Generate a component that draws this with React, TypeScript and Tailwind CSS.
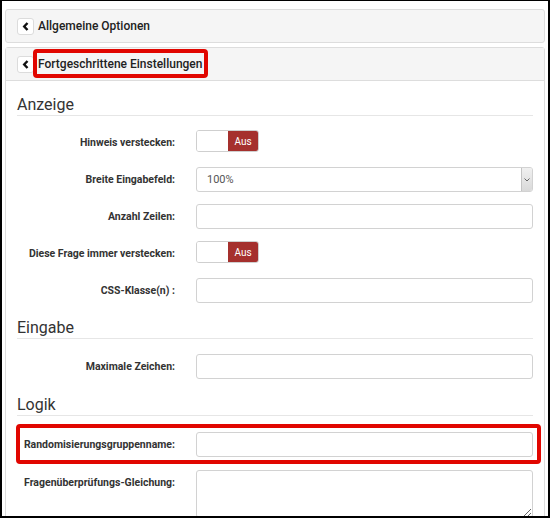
import React from "react";

function BackButton() {
  return (
    <span className="flex h-[17px] w-[17px] shrink-0 items-center justify-center rounded-[3px] border border-[#dcdcdc] bg-white">
      <svg width="8" height="9" viewBox="0 0 8 9">
        <path d="M5.5 1 L2.2 4.5 L5.5 8" fill="none" stroke="#111" strokeWidth="2.4" />
      </svg>
    </span>
  );
}

function Heading({ children, className }: { children: React.ReactNode; className: string }) {
  return (
    <h3 className={`border-b border-[#e6e6e6] text-[16px] leading-[20px] text-[#333] ${className}`}>
      {children}
    </h3>
  );
}

function Row({
  label,
  children,
  highlight,
}: {
  label: string;
  children: React.ReactNode;
  highlight?: boolean;
}) {
  return (
    <div className="relative flex items-start gap-[21px]">
      <label className="w-[158px] shrink-0 text-right text-[10.5px] font-bold leading-[25px] text-[#333] whitespace-nowrap">
        {label}
      </label>
      <div className="min-h-[25px] flex-1">{children}</div>
      {highlight && (
        <div className="pointer-events-none absolute -left-[1px] -right-[8px] -top-[8px] -bottom-[7px] rounded-[4px] border-4 border-[#e10600]" />
      )}
    </div>
  );
}

function Toggle() {
  return (
    <div className="flex h-[22px] w-[63px] overflow-hidden rounded-[3px] border border-[#cfcfcf]">
      <div className="w-[31px] bg-white" />
      <div className="flex flex-1 items-center justify-center bg-[#a5302d] text-[10px] text-white">
        Aus
      </div>
    </div>
  );
}

function TextInput() {
  return <div className="h-[25px] rounded-[3px] border border-[#d2d2d2] bg-white" />;
}

function Select() {
  return (
    <div className="flex h-[25px] items-stretch overflow-hidden rounded-[3px] border border-[#d2d2d2] bg-white">
      <span className="flex-1 pl-[10px] text-[11px] leading-[23px] text-[#555]">100%</span>
      <span className="flex w-[11px] items-center justify-center border-l border-[#c4c4c4] bg-gradient-to-b from-[#f0f0f0] to-[#d9d9d9]">
        <svg width="6" height="4" viewBox="0 0 6 4">
          <path d="M0.5 0.5 L3 3 L5.5 0.5" fill="none" stroke="#666" strokeWidth="1" />
        </svg>
      </span>
    </div>
  );
}

export default function App() {
  return (
    <div className="h-[518px] w-[550px] overflow-hidden border-t border-l-2 border-r-2 border-b-2 border-black bg-white px-[3px] pt-[8px] font-['Roboto',sans-serif]">
      <div className="flex h-[34px] items-center gap-[4px] rounded-[3px] border border-[#dddddd] bg-[#f5f5f5] px-[11px]">
        <BackButton />
        <span className="text-[12px] font-medium text-[#222]">Allgemeine Optionen</span>
      </div>

      <div className="mt-[4px] rounded-t-[3px] border border-[#dddddd]">
        <div className="flex h-[33px] items-center gap-[4px] border-b border-[#dddddd] bg-[#f5f5f5] px-[11px]">
          <BackButton />
          <span className="relative text-[12px] font-medium leading-[14px] text-[#222]">
            Fortgeschrittene Einstellungen
            <span className="pointer-events-none absolute -left-[5px] -right-[6px] -top-[8px] -bottom-[7px] rounded-[4px] border-4 border-[#e10600]" />
          </span>
        </div>

        <div className="px-[11px] pb-[20px]">
          <Heading className="mt-[14px] mb-[14px]">Anzeige</Heading>
          <div className="flex flex-col gap-[12px]">
            <Row label="Hinweis verstecken:">
              <Toggle />
            </Row>
            <Row label="Breite Eingabefeld:">
              <Select />
            </Row>
            <Row label="Anzahl Zeilen:">
              <TextInput />
            </Row>
            <Row label="Diese Frage immer verstecken:">
              <Toggle />
            </Row>
            <Row label="CSS-Klasse(n) :">
              <TextInput />
            </Row>
          </div>

          <Heading className="mt-[15px] mb-[15px]">Eingabe</Heading>
          <div className="flex flex-col gap-[12px]">
            <Row label="Maximale Zeichen:">
              <TextInput />
            </Row>
          </div>

          <Heading className="mt-[16px] mb-[16px]">Logik</Heading>
          <div className="flex flex-col gap-[13px]">
            <Row label="Randomisierungsgruppenname:" highlight>
              <TextInput />
            </Row>
            <Row label="Fragenüberprüfungs-Gleichung:">
              <textarea className="block h-[48px] w-full resize-y rounded-[3px] border border-[#d2d2d2] bg-white" />
            </Row>
          </div>
        </div>
      </div>
    </div>
  );
}
